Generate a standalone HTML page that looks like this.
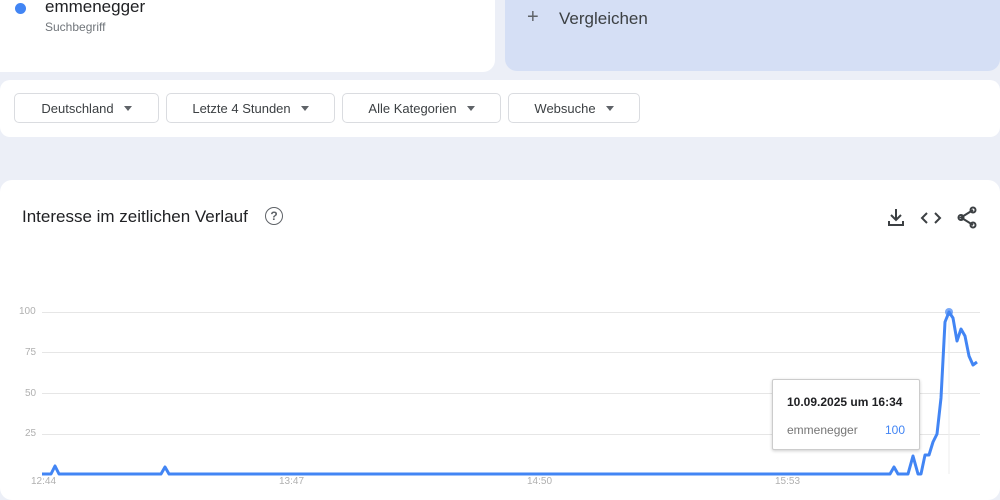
<!DOCTYPE html>
<html><head><meta charset="utf-8"><style>
body{margin:0;width:1000px;height:487px;overflow:hidden;background:#eceff7;font-family:"Liberation Sans",Arial,sans-serif;position:relative}
.card1{position:absolute;left:-20px;top:-20px;width:515px;height:92px;background:#fff;border-radius:12px}
.cmp{position:absolute;left:505px;top:-20px;width:495px;height:91px;background:#d5dff5;border-radius:12px}
.filt{position:absolute;left:0;top:80px;width:1000px;height:57px;background:#fff;border-radius:10px}
.btn{position:absolute;top:93px;height:30px;border:1px solid #dadce0;border-radius:5px;background:#fff;font-size:13px;color:#3c4043;display:flex;align-items:center;justify-content:center;box-sizing:border-box}
.btn:after{content:"";border-left:4px solid transparent;border-right:4px solid transparent;border-top:5px solid #5f6368;margin-left:10px}
.chart{position:absolute;left:0;top:180px;width:1000px;height:320px;background:#fff;border-radius:12px}
.lbl{position:absolute;font-size:10px;color:#b0b0b0}
</style></head><body>
<div class="card1"></div>
<div style="position:absolute;left:15px;top:3px;width:11px;height:11px;border-radius:50%;background:#4285f4"></div>
<div style="position:absolute;left:45px;top:-3px;font-size:17px;color:#202124">emmenegger</div>
<div style="position:absolute;left:45px;top:20px;font-size:12px;color:#70757a">Suchbegriff</div>
<div class="cmp"></div>
<div style="position:absolute;left:527px;top:6px;font-size:20px;color:#5f6368">+</div>
<div style="position:absolute;left:559px;top:9px;font-size:17px;color:#3c4043">Vergleichen</div>
<div class="filt"></div>
<div class="btn" style="left:14px;width:145px">Deutschland</div>
<div class="btn" style="left:166px;width:169px">Letzte 4 Stunden</div>
<div class="btn" style="left:342px;width:159px">Alle Kategorien</div>
<div class="btn" style="left:508px;width:132px">Websuche</div>
<div class="chart"></div>
<div style="position:absolute;left:22px;top:207px;font-size:17px;color:#202124">Interesse im zeitlichen Verlauf</div>
<div style="position:absolute;left:265px;top:207px;width:16px;height:16px;border:1.6px solid #5f6368;border-radius:50%;font-size:12px;font-weight:bold;color:#5f6368;text-align:center;line-height:16px">?</div>
<svg style="position:absolute;left:885px;top:205px" width="100" height="26" fill="none" stroke="#3c4043" stroke-width="2">
<path d="M11 4v11M6 10l5 5 5-5M4 16v4h14v-4"/>
<path d="M42 8l-5 5 5 5M50 8l5 5-5 5"/>
<path d="M88 5L76 12.5 88 20" /><circle cx="88" cy="5" r="2.5"/><circle cx="76" cy="12.5" r="2.5"/><circle cx="88" cy="20" r="2.5"/>
</svg>
<svg style="position:absolute;left:0;top:0" width="1000" height="487">
<g stroke="#e6e6e6" stroke-width="1"><line x1="42" x2="980" y1="312.5" y2="312.5"/><line x1="42" x2="980" y1="352.5" y2="352.5"/><line x1="42" x2="980" y1="393.5" y2="393.5"/><line x1="42" x2="980" y1="434.5" y2="434.5"/></g>
<line x1="949" x2="949" y1="312" y2="474" stroke="#eee"/>
<polyline fill="none" stroke="#4285f4" stroke-width="3" stroke-linejoin="round" points="42,474 51,474 55,466 59,474 161,474 165,467 169,474 890,474 894,467 898,474 908,474 913,456 918,474 921,474 925,455 929,455 933,442 937,434 941,398 945,322 949,312 953,318 957,341 961,329 965,336 969,356 973,365 977,362"/>
<circle cx="949" cy="312" r="4" fill="#4285f4" opacity=".7"/>
</svg>
<div class="lbl" style="left:19px;top:306px">100</div>
<div class="lbl" style="left:25px;top:347px">75</div>
<div class="lbl" style="left:25px;top:388px">50</div>
<div class="lbl" style="left:25px;top:428px">25</div>
<div class="lbl" style="left:31px;top:476px">12:44</div>
<div class="lbl" style="left:279px;top:476px">13:47</div>
<div class="lbl" style="left:527px;top:476px">14:50</div>
<div class="lbl" style="left:775px;top:476px">15:53</div>
<div style="position:absolute;left:772px;top:379px;width:146px;height:69px;background:#fff;border:1px solid #ccc;border-radius:2px;box-shadow:0 1px 3px rgba(0,0,0,.2)"></div>
<div style="position:absolute;left:787px;top:395px;font-size:12px;font-weight:bold;color:#202124">10.09.2025 um 16:34</div>
<div style="position:absolute;left:787px;top:423px;font-size:12px;color:#757575">emmenegger</div>
<div style="position:absolute;left:885px;top:423px;font-size:12px;color:#4285f4">100</div>
</body></html>
